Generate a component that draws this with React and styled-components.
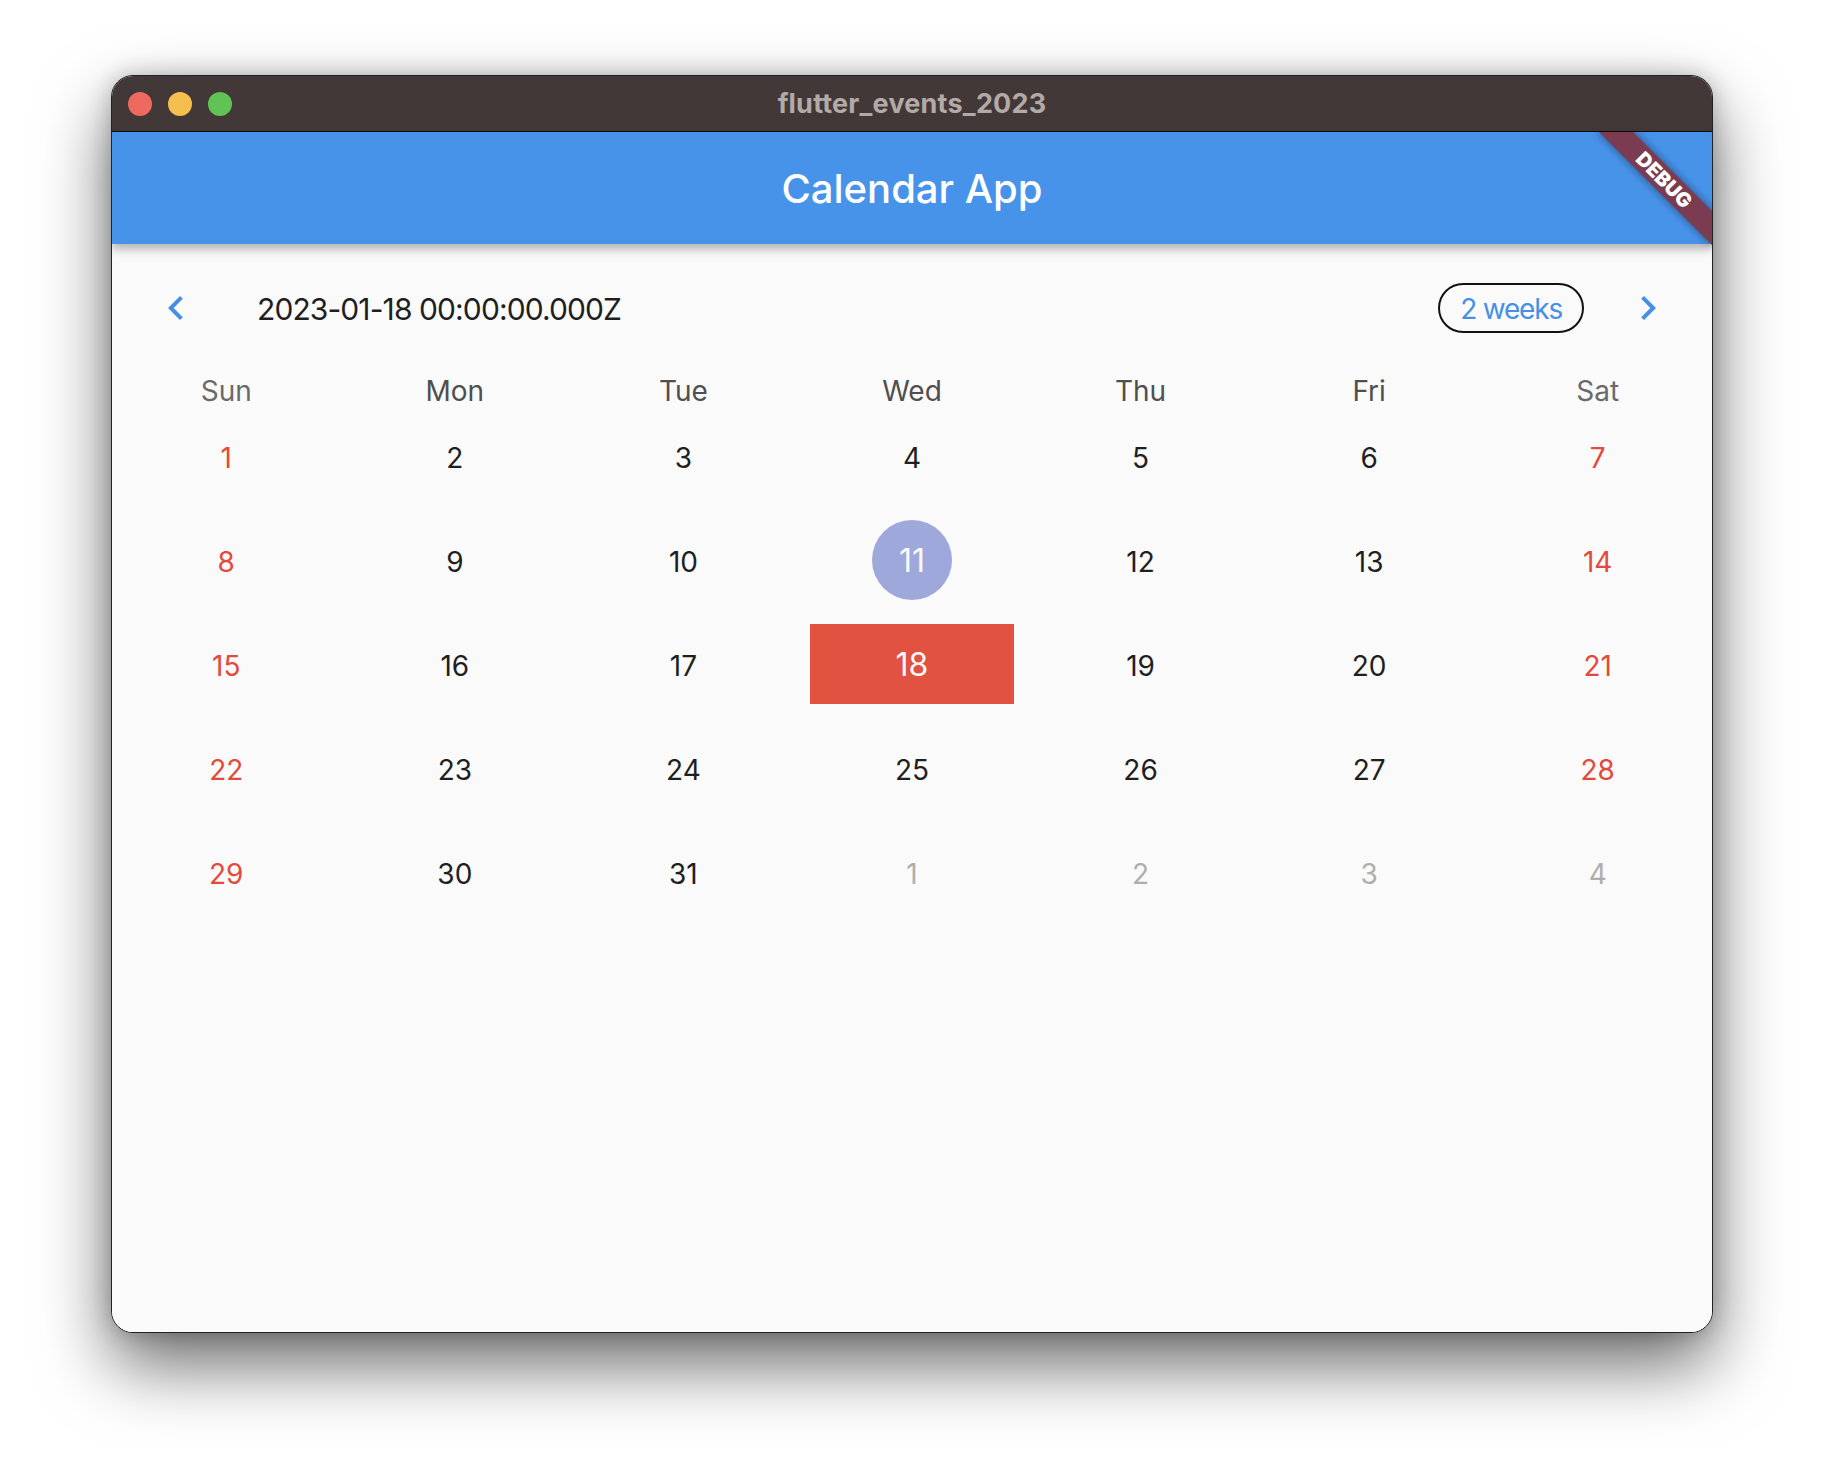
import React from 'react';
import styled, { createGlobalStyle } from 'styled-components';

const GlobalStyle = createGlobalStyle`
  html, body { margin: 0; padding: 0; background: #ffffff; }
  body { font-family: Inter, "Noto Sans", sans-serif; -webkit-font-smoothing: antialiased; }
`;

const Page = styled.div`
  width: 1824px;
  height: 1480px;
  box-sizing: border-box;
  padding: 75px 0 0 111px;
  background: #ffffff;
  overflow: hidden;
`;

const Window = styled.div`
  width: 1602px;
  height: 1258px;
  box-sizing: border-box;
  border: 1px solid #222;
  border-radius: 22px;
  overflow: hidden;
  display: flex;
  flex-direction: column;
  background: #fafafa;
  box-shadow: 0 32px 70px rgba(0, 0, 0, 0.58), 0 0 22px rgba(0, 0, 0, 0.22);
`;

const TitleBar = styled.div`
  flex: none;
  height: 56px;
  box-sizing: border-box;
  background: #413837;
  border-bottom: 1px solid #0e0c0c;
  display: grid;
  grid-template-columns: 1fr auto 1fr;
  align-items: center;
`;

const Lights = styled.div`
  display: flex;
  gap: 16px;
  padding-left: 16px;
`;

const Light = styled.span`
  width: 24px;
  height: 24px;
  border-radius: 50%;
  background: ${(p) => p.$color};
`;

const WindowTitle = styled.div`
  font-family: Inter, sans-serif;
  font-weight: 700;
  font-size: 27px;
  color: #b3aaa7;
  letter-spacing: 0.2px;
`;

const AppArea = styled.div`
  position: relative;
  flex: 1;
  display: flex;
  flex-direction: column;
  min-height: 0;
`;

const AppBar = styled.header`
  position: relative;
  z-index: 2;
  flex: none;
  height: 112px;
  background: #4893ea;
  display: flex;
  align-items: center;
  justify-content: center;
  box-shadow: 0 4px 8px rgba(0, 0, 0, 0.2), 0 8px 10px rgba(0, 0, 0, 0.1);
`;

const AppTitle = styled.h1`
  margin: 0;
  font-family: Inter, sans-serif;
  font-weight: 500;
  font-size: 40px;
  color: #ffffff;
`;

const Body = styled.main`
  flex: 1;
  background: #fafafa;
`;

const Header = styled.div`
  display: flex;
  align-items: center;
  padding: 16px 0;
`;

const ChevronButton = styled.button`
  flex: none;
  margin: 0 16px;
  padding: 24px;
  border: 0;
  background: transparent;
  display: flex;
  svg { width: 48px; height: 48px; display: block; }
`;

const HeaderTitle = styled.div`
  flex: 1;
  padding-left: 17px;
  padding-top: 2px;
  font-family: Inter, sans-serif;
  font-size: 30px;
  letter-spacing: -0.9px;
  color: #1f1f1f;
`;

const FormatButton = styled.button`
  flex: none;
  height: 50px;
  box-sizing: border-box;
  padding: 2px 20px 0;
  border: 2px solid #111;
  border-radius: 25px;
  background: transparent;
  font-family: Inter, sans-serif;
  font-size: 28px;
  letter-spacing: -1.2px;
  color: #4590e6;
`;

const WeekGrid = styled.div`
  display: grid;
  grid-template-columns: repeat(7, 1fr);
  height: ${(p) => p.$h}px;
  align-items: stretch;
`;

const Dow = styled.div`
  display: flex;
  align-items: center;
  justify-content: center;
  padding-top: 2px;
  font-size: 28px;
  color: ${(p) => (p.$weekend ? '#6a6a6a' : '#4f4f4f')};
`;

const DayCell = styled.div`
  display: flex;
  align-items: center;
  justify-content: center;
  padding: 12px;
`;

const isMarked = (k) => k === 'today' || k === 'selected';

const dayColor = (p) => {
  if (isMarked(p.$kind)) return '#fafafa';
  if (p.$kind === 'outside') return '#aeaeae';
  if (p.$kind === 'weekend') return '#e34a3c';
  return '#1f1f1f';
};

const DayMark = styled.div`
  box-sizing: border-box;
  height: 80px;
  width: ${(p) => (p.$kind === 'today' ? '80px' : '100%')};
  padding-top: ${(p) => (isMarked(p.$kind) ? '0' : '4px')};
  border-radius: ${(p) => (p.$kind === 'today' ? '50%' : '0')};
  background: ${(p) =>
    p.$kind === 'today' ? '#9fa8da' : p.$kind === 'selected' ? '#e15241' : 'transparent'};
  display: flex;
  align-items: center;
  justify-content: center;
  font-size: ${(p) => (isMarked(p.$kind) ? '32px' : '28px')};
  color: ${dayColor};
`;

const BannerClip = styled.div`
  position: absolute;
  top: 0;
  right: 0;
  width: 200px;
  height: 200px;
  overflow: hidden;
  pointer-events: none;
  z-index: 5;
`;

const Ribbon = styled.div`
  position: absolute;
  left: 72px;
  top: 36px;
  width: 160px;
  height: 24px;
  transform: rotate(45deg);
  background: #7b3b50;
  box-shadow: 0 0 10px rgba(0, 0, 0, 0.45);
  display: flex;
  align-items: center;
  justify-content: center;
  font-family: Inter, sans-serif;
  font-weight: 900;
  font-size: 20px;
  line-height: 1;
  color: #ffffff;
`;

const ChevronLeft = () => (
  <svg viewBox="0 0 24 24" fill="#4590e6" aria-hidden="true">
    <path d="M15.41 7.41L14 6l-6 6 6 6 1.41-1.41L10.83 12z" />
  </svg>
);

const ChevronRight = () => (
  <svg viewBox="0 0 24 24" fill="#4590e6" aria-hidden="true">
    <path d="M10 6L8.59 7.41 13.17 12l-4.58 4.59L10 18l6-6z" />
  </svg>
);

const DOW = ['Sun', 'Mon', 'Tue', 'Wed', 'Thu', 'Fri', 'Sat'];

const weeks = [
  [1, 2, 3, 4, 5, 6, 7],
  [8, 9, 10, 11, 12, 13, 14],
  [15, 16, 17, 18, 19, 20, 21],
  [22, 23, 24, 25, 26, 27, 28],
  [29, 30, 31, 1, 2, 3, 4],
];

const kindOf = (w, i, d) => {
  if (w === 4 && i >= 3) return 'outside';
  if (d === 11) return 'today';
  if (d === 18) return 'selected';
  if (i === 0 || i === 6) return 'weekend';
  return 'default';
};

export default function App() {
  return (
    <>
      <GlobalStyle />
      <Page>
        <Window>
          <TitleBar>
            <Lights>
              <Light $color="#ee6a5f" />
              <Light $color="#f5bf4f" />
              <Light $color="#5fc454" />
            </Lights>
            <WindowTitle>flutter_events_2023</WindowTitle>
            <span />
          </TitleBar>
          <AppArea>
            <AppBar>
              <AppTitle>Calendar App</AppTitle>
            </AppBar>
            <Body>
              <Header>
                <ChevronButton aria-label="Previous">
                  <ChevronLeft />
                </ChevronButton>
                <HeaderTitle>2023-01-18 00:00:00.000Z</HeaderTitle>
                <FormatButton>2 weeks</FormatButton>
                <ChevronButton aria-label="Next">
                  <ChevronRight />
                </ChevronButton>
              </Header>
              <WeekGrid $h={32}>
                {DOW.map((d, i) => (
                  <Dow key={d} $weekend={i === 0 || i === 6}>
                    {d}
                  </Dow>
                ))}
              </WeekGrid>
              {weeks.map((week, w) => (
                <WeekGrid key={w} $h={104}>
                  {week.map((d, i) => {
                    const kind = kindOf(w, i, d);
                    return (
                      <DayCell key={i}>
                        <DayMark $kind={kind}>{d}</DayMark>
                      </DayCell>
                    );
                  })}
                </WeekGrid>
              ))}
            </Body>
            <BannerClip>
              <Ribbon>DEBUG</Ribbon>
            </BannerClip>
          </AppArea>
        </Window>
      </Page>
    </>
  );
}
